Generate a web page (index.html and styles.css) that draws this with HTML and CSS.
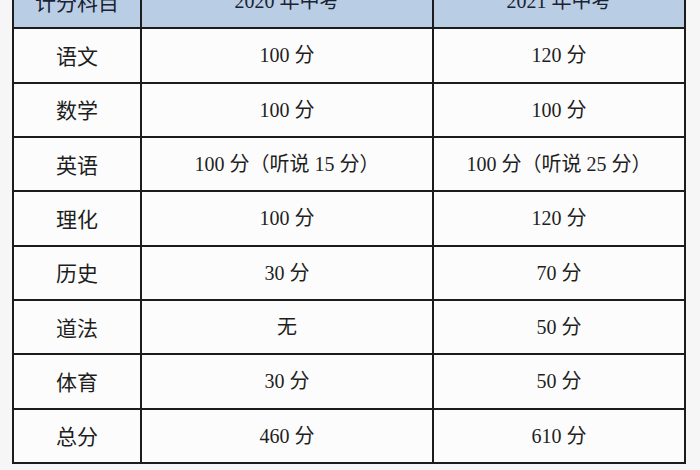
FILE: index.html
```html
<!DOCTYPE html>
<html lang="zh-CN">
<head>
<meta charset="utf-8">
<link rel="stylesheet" href="styles.css">
</head>
<body>
<div class="page">
  <div class="grid">
    <div class="cell head subj">计分科目</div>
    <div class="cell head val">2020 年中考</div>
    <div class="cell head val">2021 年中考</div>

    <div class="cell subj">语文</div>
    <div class="cell val">100 分</div>
    <div class="cell val">120 分</div>

    <div class="cell subj">数学</div>
    <div class="cell val">100 分</div>
    <div class="cell val">100 分</div>

    <div class="cell subj">英语</div>
    <div class="cell val">100 分（听说 15 分）</div>
    <div class="cell val">100 分（听说 25 分）</div>

    <div class="cell subj">理化</div>
    <div class="cell val">100 分</div>
    <div class="cell val">120 分</div>

    <div class="cell subj">历史</div>
    <div class="cell val">30 分</div>
    <div class="cell val">70 分</div>

    <div class="cell subj">道法</div>
    <div class="cell val">无</div>
    <div class="cell val">50 分</div>

    <div class="cell subj">体育</div>
    <div class="cell val">30 分</div>
    <div class="cell val">50 分</div>

    <div class="cell subj">总分</div>
    <div class="cell val">460 分</div>
    <div class="cell val">610 分</div>
  </div>
</div>
</body>
</html>
```
FILE: styles.css
```css
html, body {
  margin: 0;
  padding: 0;
  background: #f6f6f6;
  overflow: hidden;
}
.page {
  padding-left: 12px;
  margin-top: -27px;
}
.grid {
  display: grid;
  grid-template-columns: 126px 290px 250px;
  grid-auto-rows: 52.33px;
  gap: 2px;
  padding: 2px;
  width: max-content;
  background: #1c1c1c;
}
.cell {
  background: #fcfcfc;
  display: flex;
  align-items: center;
  justify-content: center;
  color: #1e1e1e;
  font-size: 20px;
  line-height: 1;
}
.subj {
  font-family: "Noto Sans CJK SC", sans-serif;
  font-size: 21px;
}
.val {
  font-family: "Liberation Serif", "Noto Sans CJK SC", serif;
}
.head {
  background: #b9cde4;
  color: #1b2233;
}
```
